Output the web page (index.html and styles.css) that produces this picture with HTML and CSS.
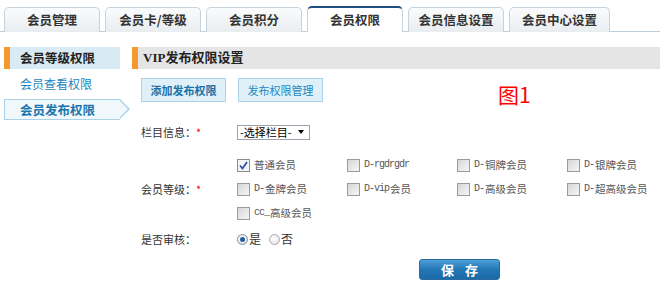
FILE: index.html
```html
<!DOCTYPE html>
<html>
<head>
<meta charset="utf-8">
<link rel="stylesheet" href="styles.css">
</head>
<body>
<div class="tabs">
  <div class="tab">会员管理</div>
  <div class="tab">会员卡/等级</div>
  <div class="tab">会员积分</div>
  <div class="tab active">会员权限</div>
  <div class="tab">会员信息设置</div>
  <div class="tab wide">会员中心设置</div>
</div>
<div class="content">
  <div class="side">
    <div class="side-head">会员等级权限</div>
    <div class="side-item">会员查看权限</div>
    <div class="side-item sel">会员发布权限<span class="arrow"></span></div>
  </div>
  <div class="main">
    <div class="main-head">VIP发布权限设置</div>
    <div class="btn-row">
      <div class="btn strong">添加发布权限</div>
      <div class="btn">发布权限管理</div>
      <div class="fig">图1</div>
    </div>
    <div class="form">
      <div class="row r-select">
        <div class="label">栏目信息：<span class="req">*</span></div>
        <div class="select"><span>-选择栏目-</span><span class="caret"></span></div>
      </div>
      <div class="row r-levels">
        <div class="label">会员等级：<span class="req">*</span></div>
        <div class="grid">
          <div class="opt"><span class="cb on"><svg viewBox="0 0 13 13" width="13" height="13"><path d="M3 6.5 L5.5 9.5 L10 3" fill="none" stroke="#2b55a8" stroke-width="1.8"/></svg></span>普通会员</div>
          <div class="opt"><span class="cb"></span><span class="mono">D-rgdrgdr</span></div>
          <div class="opt"><span class="cb"></span><span class="mono">D-</span>铜牌会员</div>
          <div class="opt"><span class="cb"></span><span class="mono">D-</span>银牌会员</div>
          <div class="opt"><span class="cb"></span><span class="mono">D-</span>金牌会员</div>
          <div class="opt"><span class="cb"></span><span class="mono">D-vip</span>会员</div>
          <div class="opt"><span class="cb"></span><span class="mono">D-</span>高级会员</div>
          <div class="opt"><span class="cb"></span><span class="mono">D-</span>超高级会员</div>
          <div class="opt"><span class="cb"></span><span class="mono">cc_</span>高级会员</div>
        </div>
      </div>
      <div class="row r-radio">
        <div class="label">是否审核：</div>
        <div class="radios">
          <span class="rd on"></span><span class="rtxt">是</span>
          <span class="rd"></span><span class="rtxt">否</span>
        </div>
      </div>
      <div class="save-row">
        <div class="save">保 存</div>
      </div>
    </div>
  </div>
</div>
</body>
</html>
```
FILE: styles.css
```css
* { box-sizing: border-box; }
body {
  margin: 0;
  width: 660px;
  height: 290px;
  overflow: hidden;
  background: #fff;
  font-family: "Noto Sans CJK SC", "Noto Sans", sans-serif;
  font-size: 12px;
  line-height: 16px;
  color: #333;
}
.tabs {
  display: flex;
  gap: 5px;
  padding: 7px 0 0 4px;
  border-bottom: 1px solid #b9d0e2;
  height: 32px;
}
.tab {
  width: 96px;
  height: 25px;
  border: 1px solid #c6d3dd;
  border-bottom: none;
  border-radius: 5px 5px 0 0;
  background: linear-gradient(#fafbfc, #e9edf0);
  display: flex;
  align-items: center;
  justify-content: center;
  font-size: 12.5px;
  font-weight: bold;
  color: #333;
}
.tab.wide { width: 101px; }
.tab.active {
  background: #fff;
  border-top: 2px solid #1e4f7e;
  height: 26px;
  margin-top: -1px;
  margin-bottom: -1px;
}
.content {
  display: flex;
  padding: 15px 0 0 4px;
  gap: 12px;
}
.side { width: 116px; }
.side-head {
  height: 22px;
  background: #d8eaf3;
  border-left: 6px solid #f29a2e;
  padding-left: 10px;
  display: flex;
  align-items: center;
  font-weight: bold;
  font-size: 12.5px;
  color: #222;
}
.side-item {
  height: 26px;
  display: flex;
  align-items: center;
  padding-left: 16px;
  font-size: 12px;
  color: #2386c0;
  margin-top: 2px;
}
.side-item.sel {
  position: relative;
  height: 21px;
  width: 116px;
  background: #f0f8fc;
  border: 1px solid #a9d2e8;
  border-right: none;
  font-weight: bold;
  font-size: 12.5px;
  color: #1c76ad;
  padding-left: 15px;
  margin-top: 2px;
}
.side-item.sel .arrow {
  position: absolute;
  right: -10px;
  top: -1px;
  width: 0; height: 0;
  border-top: 10.5px solid transparent;
  border-bottom: 10.5px solid transparent;
  border-left: 10px solid #a9d2e8;
}
.side-item.sel .arrow::after {
  content: "";
  position: absolute;
  left: -11px;
  top: -9.5px;
  border-top: 9.5px solid transparent;
  border-bottom: 9.5px solid transparent;
  border-left: 9px solid #f0f8fc;
}
.main { flex: 1; }
.main-head {
  height: 22px;
  background: #e5e5e5;
  border-left: 6px solid #f29a2e;
  padding-left: 5px;
  display: flex;
  align-items: center;
  font-family: "Liberation Serif", "Noto Sans CJK SC", serif;
  font-weight: bold;
  font-size: 13px;
  color: #222;
}
.btn-row {
  display: flex;
  gap: 12px;
  padding: 9px 0 0 9px;
  align-items: flex-start;
}
.btn {
  width: 85px;
  height: 24px;
  background: #e0f0f8;
  border: 1px solid #a9d3ea;
  display: flex;
  align-items: center;
  justify-content: center;
  color: #2386c0;
  font-size: 11px;
}
.btn.strong { font-weight: bold; color: #1a72aa; }
.fig {
  margin-left: 163px;
  margin-top: 6px;
  color: #f00;
  font-size: 21px;
  line-height: 20px;
}
.form { padding: 20px 0 0 9px; }
.row { display: flex; align-items: center; }
.label { width: 96px; color: #333; font-size: 11px; }
.req { color: #e00; margin-left: 0; }
.select {
  width: 73px;
  height: 15px;
  border: 1px solid #9aa3ad;
  display: flex;
  align-items: center;
  justify-content: space-between;
  padding: 0 5px 0 2px;
  color: #000;
  font-size: 11px;
}
.caret {
  width: 0; height: 0;
  border-left: 3.5px solid transparent;
  border-right: 3.5px solid transparent;
  border-top: 4px solid #000;
}
.r-levels { margin-top: 13px; }
.grid {
  display: grid;
  grid-template-columns: 110px 110px 110px 110px;
  grid-auto-rows: 24px;
}
.opt { display: flex; align-items: center; color: #555; white-space: nowrap; font-size: 10.5px; }
.mono { font-family: "Liberation Mono", monospace; font-size: 10px; letter-spacing: -1px; margin-right: 1px; }
.cb {
  width: 13px; height: 13px;
  border: 1px solid #9b9b9b;
  background: linear-gradient(135deg, #d6d6d6, #f7f7f7);
  margin-right: 4px;
  display: inline-flex;
  flex-shrink: 0;
}
.cb.on { background: #f4f4f4; border-color: #8d8d8d; }
.cb.on svg { margin: -1px; }
.r-radio { margin-top: 2px; height: 24px; }
.radios { display: flex; align-items: center; }
.rd {
  width: 11px; height: 11px;
  border-radius: 50%;
  border: 1px solid #a9a9a9;
  background: radial-gradient(circle at 40% 40%, #fff, #ddd);
  display: inline-flex;
  align-items: center;
  justify-content: center;
}
.rd.on { border-color: #7a8ea6; }
.rd.on::after {
  content: "";
  width: 5px; height: 5px;
  border-radius: 50%;
  background: #1f5fa0;
}
.rtxt { margin: 0 8px 0 1px; color: #333; font-size: 12px; }
.save-row { display: flex; padding: 8px 0 0 278px; }
.save {
  width: 81px;
  height: 21px;
  border: 1px solid #2a6c9e;
  border-radius: 3px;
  background: linear-gradient(#4d9fd6, #2377b5 50%, #1a6aa6);
  color: #fff;
  font-weight: bold;
  font-size: 13px;
  letter-spacing: 4px;
  display: flex;
  align-items: center;
  justify-content: center;
  padding-left: 4px;
}
```
